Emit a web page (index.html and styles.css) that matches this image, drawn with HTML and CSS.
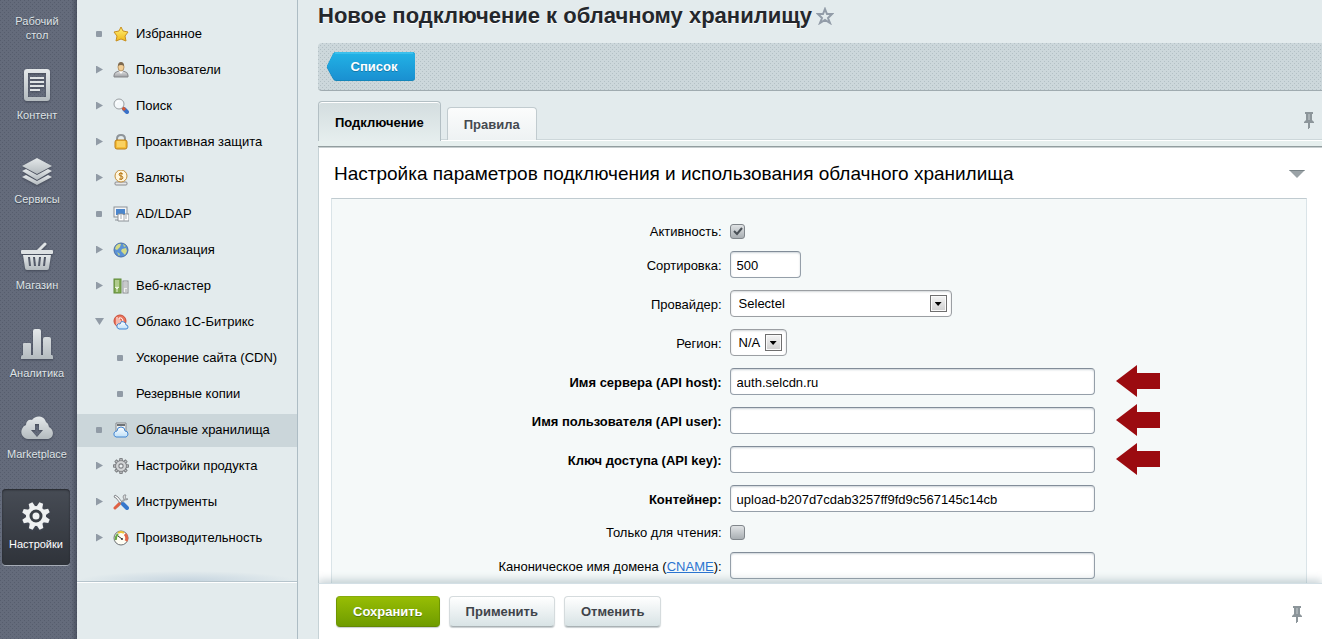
FILE: index.html
```html
<!DOCTYPE html>
<html lang="ru">
<head>
<meta charset="utf-8">
<title>Новое подключение к облачному хранилищу</title>
<link rel="stylesheet" href="styles.css">
</head>
<body>
<svg class="defs" width="0" height="0" aria-hidden="true">
  <defs>
    <linearGradient id="g-rail" x1="0" y1="0" x2="0" y2="1"><stop offset="0" stop-color="#e4e8ea"/><stop offset="1" stop-color="#b4bbbf"/></linearGradient>
    <linearGradient id="g-gold" x1="0" y1="0" x2="0" y2="1"><stop offset="0" stop-color="#fff27a"/><stop offset="1" stop-color="#f0b818"/></linearGradient>
    <linearGradient id="g-grey" x1="0" y1="0" x2="0" y2="1"><stop offset="0" stop-color="#e6e6e6"/><stop offset="1" stop-color="#9c9ea2"/></linearGradient>
    <linearGradient id="g-cloud" x1="0" y1="0" x2="0" y2="1"><stop offset="0" stop-color="#ffffff"/><stop offset="1" stop-color="#bfe0f8"/></linearGradient>
    <symbol id="pin" viewBox="0 0 10 17"><path d="M1 0h8v2H8v6l2 2v1H0v-1l2-2V2H1z" fill="#8c959a"/><path d="M4 2h2v6H4z" fill="#a9b1b5"/><path d="M4 11h2v5H5v1H4z" fill="#8c959a"/></symbol>
    <symbol id="arrow" viewBox="0 0 44 32"><path d="M0 16 21 0v8h23v16H21v8z" fill="#9b0b10"/></symbol>
    <g id="teeth"><path id="tooth" d="M-3 -9 -2 -14H2L3 -9z"/><path d="M-3 -9 -2 -14H2L3 -9z" transform="rotate(45)"/><path d="M-3 -9 -2 -14H2L3 -9z" transform="rotate(90)"/><path d="M-3 -9 -2 -14H2L3 -9z" transform="rotate(135)"/><path d="M-3 -9 -2 -14H2L3 -9z" transform="rotate(180)"/><path d="M-3 -9 -2 -14H2L3 -9z" transform="rotate(225)"/><path d="M-3 -9 -2 -14H2L3 -9z" transform="rotate(270)"/><path d="M-3 -9 -2 -14H2L3 -9z" transform="rotate(315)"/></g>
  </defs>
</svg>
<div class="shell">
  <nav class="rail" aria-label="Разделы">
    <a class="rail-item rail-item-first" href="#"><span>Рабочий стол</span></a>
    <a class="rail-item" href="#">
      <svg width="26" height="32" viewBox="0 0 26 32"><path fill="url(#g-rail)" fill-rule="evenodd" d="M3 0h20a3 3 0 0 1 3 3v26a3 3 0 0 1-3 3H3a3 3 0 0 1-3-3V3a3 3 0 0 1 3-3zM4 4v24h18V4z"/><path stroke="#dfe3e5" stroke-width="2" d="M6 9h14M6 13h14M6 17h14M6 21h10"/></svg>
      <span>Контент</span></a>
    <a class="rail-item" href="#">
      <svg width="32" height="27" viewBox="0 0 32 27"><g fill="url(#g-rail)"><path d="M16 0 31 8 16 16 1 8z"/><path d="M1 13l4-2 11 6 11-6 4 2-15 9z"/><path d="M1 19l4-2 11 6 11-6 4 2-15 8z"/></g></svg>
      <span>Сервисы</span></a>
    <a class="rail-item" href="#">
      <svg width="32" height="29" viewBox="0 0 32 29"><path d="M17 9 24 2" stroke="#e0e4e6" stroke-width="3" stroke-linecap="round"/><rect y="8" width="32" height="4" rx="1" fill="#dde1e3"/><path fill="url(#g-rail)" fill-rule="evenodd" d="M2 13h28l-2 13q0 2-2 2H6q-2 0-2-2zM7 15l1 9h2l-1-9zM12 15l1 9h2l-1-9zM18 15l-1 9h2l1-9zM23 15l-1 9h2l1-9z"/></svg>
      <span>Магазин</span></a>
    <a class="rail-item" href="#">
      <svg width="32" height="31" viewBox="0 0 32 31"><path fill="url(#g-rail)" d="M2 16q0-1 1-1h6q1 0 1 1v11h2V3q0-2 2-2h4q2 0 2 2v24h2V11q0-2 2-2h4q2 0 2 2v16h1q1 0 1 2v2H0v-2q0-2 2-2z"/></svg>
      <span>Аналитика</span></a>
    <a class="rail-item" href="#">
      <svg width="32" height="24" viewBox="0 0 32 24"><path fill="url(#g-rail)" fill-rule="evenodd" d="M7 23a7 7 0 0 1-6-10 6 6 0 0 1 4-4C5 5 8 3 11 4c3-5 12-5 14 2a6 6 0 0 1 3 5c6 3 5 12-2 12zM14 8v6h-4l6 7 6-7h-4V8z"/></svg>
      <span>Marketplace</span></a>
    <a class="rail-item rail-item-active" href="#" aria-current="page">
      <svg width="28" height="28" viewBox="-14 -14 28 28"><g transform="rotate(22)" fill="#eff1f2"><use href="#teeth"/><circle r="10"/></g><circle r="5" fill="none" stroke="#3b4047" stroke-width="3"/></svg>
      <span>Настройки</span></a>
  </nav>

  <nav class="menu" aria-label="Меню настроек">
    <ul>
      <li><a href="#"><i class="dot"></i>
        <svg width="16" height="16" viewBox="0 0 16 16"><path d="M8 1l2 4 5 1-3 4 1 5-5-2-5 2 1-5-3-4 5-1z" fill="url(#g-gold)" stroke="#c98f1e" stroke-linejoin="round"/></svg>Избранное</a></li>
      <li><a href="#"><i class="tri"></i>
        <svg width="16" height="16" viewBox="0 0 16 16"><path d="M1 15v-2q0-3 5-4h4q5 1 5 4v2z" fill="url(#g-grey)" stroke="#85878a"/><path d="M6 9l2 3 2-3z" fill="#fff"/><ellipse cx="8" cy="5" rx="3" ry="4" fill="#f3cf97" stroke="#b99767"/><path d="M5 4q0-4 3-4t3 4q-3-2-6 0z" fill="#7e6a50"/></svg>Пользователи</a></li>
      <li><a href="#"><i class="tri"></i>
        <svg width="16" height="16" viewBox="0 0 16 16"><path d="M11 11l3 3" stroke="#3a71c8" stroke-width="4" stroke-linecap="round"/><path d="M9 9l3 3" stroke="#d65a35" stroke-width="3"/><circle cx="6" cy="6" r="5" fill="#f4f8fa" stroke="#9a9fa3" stroke-width="1"/><path d="M3 6q0-3 3-3" stroke="#fff" fill="none"/></svg>Поиск</a></li>
      <li><a href="#"><i class="tri"></i>
        <svg width="16" height="16" viewBox="0 0 16 16"><path d="M4 8V5q0-4 4-4t4 4v3" fill="none" stroke="#8e9499" stroke-width="2"/><rect x="2" y="6" width="12" height="9" rx="2" fill="#f5bd36" stroke="#bb7d16"/><path d="M4 8h8M4 10h8M4 12h8" stroke="#ffe58c"/></svg>Проактивная защита</a></li>
      <li><a href="#"><i class="tri"></i>
        <svg width="16" height="16" viewBox="0 0 16 16"><rect x="2" y="12" width="12" height="3" rx="1" fill="#e7e7e7" stroke="#8a8b8e"/><circle cx="8" cy="6" r="6" fill="#fff6de" stroke="#c28e3b"/><path d="M10 4q-4-2-4 0t2 2 2 2-4 1M8 2v8" fill="none" stroke="#b77813"/></svg>Валюты</a></li>
      <li><a href="#"><i class="dot"></i>
        <svg width="16" height="16" viewBox="0 0 16 16"><rect x="1" y="1" width="13" height="10" fill="#f4f5f6" stroke="#8b9197"/><path d="M3 3h9v6H3z" fill="#4b86cc"/><path d="M2 14h5" stroke="#8b9197"/><path d="M5 8h5l1 1 1-1h4v7H5z" fill="#fff" stroke="#8b9197"/><path d="M11 9v6M7 10h2M7 12h2M12 10h2M12 12h2" stroke="#a6abb0"/></svg>AD/LDAP</a></li>
      <li><a href="#"><i class="tri"></i>
        <svg width="16" height="16" viewBox="0 0 16 16"><circle cx="8" cy="8" r="7" fill="#5b92d6" stroke="#4a6ea5"/><path d="M3 4q3-3 5-2l-1 3-3 3-2-1zM9 7l4-1 1 3-2 4-2-2-2-2z" fill="#d4da86"/><path d="M10 2l3 2-2 1zM4 10l3 2-1 2z" fill="#c2d37f"/></svg>Локализация</a></li>
      <li><a href="#"><i class="tri"></i>
        <svg width="16" height="16" viewBox="0 0 16 16"><rect x="1" y="1" width="7" height="14" fill="#85ad55" stroke="#5f8a38"/><path d="M2 3h4M2 5h4M2 7h4" stroke="#dcebc6"/><path d="M2 9h4l-2 2zM4 10v4" fill="#e9f3db" stroke="#e9f3db"/><rect x="10" y="3" width="5" height="12" fill="#f0f0f0" stroke="#8b8e91"/><path d="M11 5h3M11 7h3M11 9h3M13 11v3" stroke="#a0a3a6"/></svg>Веб-кластер</a></li>
      <li><a href="#"><i class="tri tri-open"></i>
        <svg width="16" height="16" viewBox="0 0 16 16"><circle cx="7" cy="7" r="6" fill="#e8735c" stroke="#c94d38"/><path d="M4 3v8M6 10V4q4-1 4 4M7 7h1" fill="none" stroke="#fff"/><path d="M6 15q-3-1-2-4 1-2 3-1 1-4 4-2 2 1 2 3 2 0 2 2t-2 2z" fill="url(#g-cloud)" stroke="#4286d2"/></svg>Облако 1С-Битрикс</a></li>
      <li><a class="sub" href="#"><i class="dot"></i>Ускорение сайта (CDN)</a></li>
      <li><a class="sub" href="#"><i class="dot"></i>Резервные копии</a></li>
      <li><a class="current" href="#" aria-current="page"><i class="dot"></i>
        <svg width="16" height="16" viewBox="0 0 16 16"><path d="M3 1h10v9H3z" fill="#eceeef" stroke="#85898d"/><path d="M4 3h8" stroke="#6e7276" stroke-width="2"/><path d="M3 15q-3-1-2-4 1-2 3-2 0-4 4-4t4 4q3 0 3 3 0 2-2 3z" fill="url(#g-cloud)" stroke="#4286d2"/></svg>Облачные хранилища</a></li>
      <li><a href="#"><i class="tri"></i>
        <svg width="16" height="16" viewBox="-15 -15 30 30"><g fill="#c3c5c8" stroke="#808386" stroke-width="2"><use href="#teeth"/><circle r="10"/></g><circle r="9" fill="#d2d4d6"/><circle r="4" fill="#eef2f3" stroke="#808386" stroke-width="2"/></svg>Настройки продукта</a></li>
      <li><a href="#"><i class="tri"></i>
        <svg width="16" height="16" viewBox="0 0 16 16"><path d="M4 13l8-8" stroke="#a3a7aa" stroke-width="2"/><path d="M2 14l5-5" stroke="#e06144" stroke-width="3" stroke-linecap="round"/><path d="M11 1q-2 2 0 4t4 0l-2 0-1-2 1-2z" fill="#f3f3f3" stroke="#8f9397"/><path d="M2 1l3 2 4 5-2 1-4-5-2-1z" fill="#f7f7f7" stroke="#85898d"/><path d="M10 10l4 4" stroke="#3577cc" stroke-width="4" stroke-linecap="round"/></svg>Инструменты</a></li>
      <li><a href="#"><i class="tri"></i>
        <svg width="16" height="16" viewBox="0 0 16 16"><circle cx="8" cy="8" r="7" fill="#fffef4" stroke="#6e7276"/><path d="M3 10q-1-3 2-6" stroke="#67a844" stroke-width="2" fill="none"/><path d="M5 3q3-2 6 0" stroke="#f0c539" stroke-width="2" fill="none"/><path d="M12 4q3 3 1 7" stroke="#e26748" stroke-width="3" fill="none"/><path d="M5 6l4 3" stroke="#333" stroke-width="1"/><circle cx="9" cy="9" r="1" fill="#333"/></svg>Производительность</a></li>
    </ul>
    <div class="menu-end"></div>
  </nav>

  <main class="main">
    <div class="scroll">
      <header class="title-row">
        <h1>Новое подключение к облачному хранилищу</h1>
        <button class="plain" type="button" aria-label="В избранное"><svg width="18" height="18" viewBox="0 0 18 18"><path d="M9 2l2 5h5l-4 4 2 5-5-3-5 3 2-5-4-4h5z" fill="none" stroke="#929ca8" stroke-width="2"/></svg></button>
      </header>
      <div class="toolbar"><a class="back" href="#"><svg width="88" height="30" viewBox="0 0 88 30" aria-hidden="true"><defs><linearGradient id="g-blue" x1="0" y1="0" x2="0" y2="1"><stop offset="0" stop-color="#22b3e6"/><stop offset="1" stop-color="#1a90d1"/></linearGradient></defs><path d="M9 0h76q3 0 3 3v23q0 3-3 3H9q-2 0-3-2L0 16v-2L6 2q1-2 3-2z" fill="#1486bb"/><path d="M9 0h76q3 0 3 3v22q0 3-3 3H9q-2 0-3-2L0 15v-1L6 2q1-2 3-2z" fill="url(#g-blue)"/><path d="M8 1h78" stroke="#55cdf3"/></svg><span>Список</span></a></div>
      <div class="tabs" role="tablist">
        <button class="tab tab-active" type="button" role="tab" aria-selected="true">Подключение</button>
        <button class="tab" type="button" role="tab" aria-selected="false">Правила</button>
        <button class="plain tabs-pin" type="button" aria-label="Закрепить"><svg width="10" height="17"><use href="#pin"/></svg></button>
      </div>
      <div class="strip"></div>
      <section class="sheet">
        <div class="sheet-head">
          <h2>Настройка параметров подключения и использования облачного хранилища</h2>
          <button class="plain" type="button" aria-label="Свернуть"><svg width="16" height="8" viewBox="0 0 16 8"><path d="M0 0h16L8 8z" fill="#9aa2a6"/><path d="M0 0h16l-1 1H1z" fill="#788286"/></svg></button>
        </div>
        <form class="panel" id="storage">
          <div class="row row-check"><label for="active">Активность:</label><div class="field"><span class="check"><input id="active" type="checkbox" checked><svg width="15" height="15" viewBox="0 0 15 15"><path d="M4 7l3 3 5-6" fill="none" stroke="#4a5157" stroke-width="2"/></svg></span></div></div>
          <div class="row"><label for="sort">Сортировка:</label><div class="field"><input class="text short" id="sort" type="text" value="500"></div></div>
          <div class="row"><label for="provider">Провайдер:</label><div class="field"><span class="select wide"><select id="provider"><option>Selectel</option></select></span></div></div>
          <div class="row"><label for="region">Регион:</label><div class="field"><span class="select tiny"><select id="region"><option>N/A</option></select></span></div></div>
          <div class="row required"><label for="host">Имя сервера (API host):</label><div class="field"><input class="text" id="host" type="text" value="auth.selcdn.ru"><svg class="arrow" width="44" height="32"><use href="#arrow"/></svg></div></div>
          <div class="row required"><label for="user">Имя пользователя (API user):</label><div class="field"><input class="text" id="user" type="text"><svg class="arrow" width="44" height="32"><use href="#arrow"/></svg></div></div>
          <div class="row required"><label for="key">Ключ доступа (API key):</label><div class="field"><input class="text" id="key" type="text"><svg class="arrow" width="44" height="32"><use href="#arrow"/></svg></div></div>
          <div class="row required"><label for="bucket">Контейнер:</label><div class="field"><input class="text" id="bucket" type="text" value="upload-b207d7cdab3257ff9fd9c567145c14cb"></div></div>
          <div class="row row-check"><label for="readonly">Только для чтения:</label><div class="field"><span class="check"><input id="readonly" type="checkbox"></span></div></div>
          <div class="row"><label for="cname">Каноническое имя домена (<a href="#">CNAME</a>):</label><div class="field"><input class="text" id="cname" type="text"></div></div>
        </form>
      </section>
    </div>
    <footer class="actions">
      <button class="btn btn-save" type="submit" form="storage">Сохранить</button>
      <button class="btn" type="button">Применить</button>
      <button class="btn" type="button">Отменить</button>
      <button class="plain actions-pin" type="button" aria-label="Закрепить"><svg width="10" height="17"><use href="#pin"/></svg></button>
    </footer>
  </main>
</div>
</body>
</html>
```
FILE: styles.css
```css
*, *::before, *::after { box-sizing: border-box; }

body {
  margin: 0;
  background: #e3ebed;
  color: #000;
  font: 13px/16px "Liberation Sans", Arial, sans-serif;
}

button, input, select { font: inherit; color: inherit; }
svg { display: block; flex: none; }
.defs { position: absolute; }

.plain {
  padding: 0;
  border: 0;
  background: none;
  cursor: pointer;
}

.shell {
  display: flex;
  height: 100vh;
  overflow: hidden;
}

/* Section rail */
.rail {
  flex: none;
  width: 77px;
  padding: 0 7px 0 2px;
  display: flex;
  flex-direction: column;
  gap: 9px;
  background-color: #646b7b;
  background-image:
    linear-gradient(to left, rgba(40, 46, 60, .4), transparent 6px),
    conic-gradient(at 1px 1px, transparent 75%, #565d6d 0),
    conic-gradient(at 1px 1px, transparent 75%, #565d6d 0);
  background-size: auto, 4px 4px, 4px 4px;
  background-position: 0 0, 0 0, 2px 2px;
}

.rail-item {
  display: flex;
  flex-direction: column;
  align-items: center;
  gap: 7px;
  padding: 13px 0 14px 2px;
  border-radius: 4px;
  color: #dfe3e6;
  font-size: 11px;
  line-height: 14px;
  text-align: center;
  text-decoration: none;
  text-shadow: 0 1px 1px #3a404c;
}

.rail-item-first { padding: 14px 11px 5px 13px; }

.rail-item svg { filter: drop-shadow(0 1px 1px #434957); }

.rail-item-active {
  margin-top: 5px;
  padding-left: 0;
  color: #fff;
  background: linear-gradient(#474c55, #2f333a);
  box-shadow: inset 0 1px 2px #22252b, 0 1px 0 #a6acb6;
}

/* Settings menu */
.menu {
  flex: none;
  width: 221px;
  padding-top: 18px;
  border-right: 1px solid #adbcc4;
}

.menu ul {
  margin: 0;
  padding: 0;
  display: flex;
  flex-direction: column;
  gap: 3px;
  list-style: none;
}

.menu a {
  display: flex;
  align-items: center;
  gap: 7px;
  height: 33px;
  padding: 0 0 2px 18px;
  color: #000;
  text-decoration: none;
  white-space: nowrap;
}

.menu a.sub { padding-left: 39px; gap: 13px; }
.menu a.current { background: #cbd6da; }

.dot {
  width: 6px;
  height: 6px;
  margin: 0 4px 0 1px;
  border-radius: 1px;
  background: #919ba6;
}

.sub .dot { margin-right: 0; }

.tri {
  width: 7px;
  height: 8px;
  margin: 0 3px 0 1px;
  background: #919ba6;
  clip-path: polygon(0 0, 100% 50%, 0 100%);
}

.tri-open {
  width: 9px;
  height: 7px;
  margin: 0 2px 0 0;
  clip-path: polygon(0 0, 100% 0, 50% 100%);
}

.menu-end {
  height: 27px;
  border-bottom: 1px solid #b6c4cc;
  box-shadow: 0 1px 0 #fff;
  background: radial-gradient(ellipse 110px 10px at 50% 100%, #c5d4df, transparent);
}

/* Main column */
.main {
  flex: 1;
  min-width: 0;
  padding-left: 20px;
  display: flex;
  flex-direction: column;
}

.scroll {
  flex: 1;
  min-height: 0;
  overflow-y: auto;
  scrollbar-width: none;
}

.title-row {
  display: flex;
  align-items: center;
  gap: 4px;
  padding: 2px 0 13px;
}

h1 {
  margin: 0;
  color: #24272c;
  font-size: 22px;
  line-height: 28px;
  text-shadow: 0 1px 0 #fff;
}

.toolbar {
  display: flex;
  align-items: center;
  height: 48px;
  padding: 0 9px;
  border-bottom: 1px solid #a0abb0;
  border-radius: 4px 0 0 4px;
  background-color: #ccd7db;
  background-image:
    conic-gradient(at 1px 1px, transparent 75%, #b3c0c5 0),
    conic-gradient(at 1px 1px, transparent 75%, #b3c0c5 0);
  background-size: 4px 4px;
  background-position: 0 0, 2px 2px;
}

.back {
  display: grid;
  color: #fff;
  font-weight: bold;
  line-height: 30px;
  text-align: center;
  text-decoration: none;
  text-shadow: 0 1px 0 #1579ab;
}

.back svg, .back span { grid-area: 1 / 1; }
.back span { padding-left: 6px; z-index: 1; }

.tabs {
  display: flex;
  align-items: flex-end;
  gap: 6px;
  padding-top: 10px;
  border-bottom: 1px solid #fff;
  box-shadow: inset 0 -1px 0 #cdd7da;
}

.tab {
  height: 33px;
  padding: 1px 16px 0;
  border: 1px solid #c1cbcf;
  border-bottom: 0;
  border-radius: 4px 4px 0 0;
  background: linear-gradient(#fbfcfc, #eef2f3);
  color: #45494f;
  font-weight: bold;
}

.tab-active {
  height: 40px;
  margin-bottom: -1px;
  padding-top: 2px;
  border-color: #b3bfc4;
  background: linear-gradient(#d3dddf, #e6eeee);
  box-shadow: inset 0 1px 0 #fff;
  color: #000;
}

.tabs-pin { margin: 0 8px 11px auto; }

.strip {
  height: 6px;
  border-bottom: 1px solid #929d9f;
  background: #e6efee;
}

.sheet {
  padding: 0 15px 20px 12px;
  border-left: 1px solid #c6d2d6;
  border-top: 1px solid #c8cfd0;
  background: #fff;
}

.sheet-head {
  display: flex;
  align-items: center;
  justify-content: space-between;
  gap: 16px;
  height: 50px;
  padding: 2px 2px 0 3px;
}

h2 {
  margin: 0;
  font-size: 19px;
  font-weight: normal;
  line-height: 24px;
}

.panel {
  padding: 18px 0;
  border: 1px solid #dae4e8;
  border-top-color: #c0cbd0;
  background: #f5f9f9;
}

.row {
  display: grid;
  grid-template-columns: 40% 1fr;
  align-items: center;
  column-gap: 8px;
  padding: 6px 0;
}

.row-check { height: 28px; padding: 0; }
.row > label { padding-top: 2px; text-align: right; }
.required > label { font-weight: bold; }
.row a { color: #2a74d0; }

.field {
  display: flex;
  align-items: center;
  gap: 21px;
}

.text {
  width: 365px;
  height: 27px;
  padding: 1px 6px 0;
  border: 1px solid #959fa9;
  border-top-color: #828d99;
  border-radius: 4px;
  background: #fff;
  box-shadow: inset 0 1px 2px #ccd3d8;
}

.short { width: 71px; }
.arrow { margin: -5px 0 -3px; }

.select { position: relative; }
.wide { width: 222px; }
.tiny { width: 57px; }

.select select {
  display: block;
  width: 100%;
  height: 27px;
  padding: 1px 20px 0 8px;
  appearance: none;
  border: 1px solid #9b9fa3;
  border-radius: 4px;
  background: #fff;
  box-shadow: inset 0 1px 2px #d3d7da;
}

.select::before {
  content: "";
  position: absolute;
  top: 5px;
  right: 5px;
  width: 17px;
  height: 17px;
  border: 1px solid #6f6f6f;
  background: linear-gradient(#f4f4f4, #cfcfcf);
  box-shadow: inset 0 0 0 1px #fafafa;
  pointer-events: none;
}

.select::after {
  content: "";
  position: absolute;
  top: 12px;
  right: 10px;
  width: 7px;
  height: 4px;
  background: #000;
  clip-path: polygon(0 0, 100% 0, 50% 100%);
  pointer-events: none;
}

.check { position: relative; }

.check input {
  display: block;
  width: 15px;
  height: 15px;
  margin: 0;
  appearance: none;
  border: 1px solid #80868b;
  border-radius: 3px;
  background: linear-gradient(#e0e3e5, #a9afb3);
}

.check svg {
  position: absolute;
  inset: 0;
  pointer-events: none;
}

/* Action bar */
.actions {
  position: relative;
  flex: none;
  display: flex;
  align-items: center;
  gap: 9px;
  height: 56px;
  padding: 0 20px 0 17px;
  border-left: 1px solid #c6d2d6;
  border-top: 1px solid #d3dfe5;
  background: #fff;
  box-shadow: 0 -3px 8px rgba(120, 145, 155, .4);
  clip-path: inset(-12px 0 0 0);
}

.btn {
  height: 31px;
  padding: 0 16px;
  border: 1px solid #d5dbdd;
  border-bottom-color: #a9b1b4;
  border-radius: 4px;
  background: linear-gradient(#fff, #d8e3e5);
  box-shadow: 0 1px 1px #c9cfd1;
  color: #3f4449;
  font-weight: bold;
}

.btn-save {
  border-color: #86ab0d #6f9600 #648805;
  background: linear-gradient(#97bd04, #6f9c00);
  color: #fff;
  text-shadow: 0 1px 0 #56780a;
}

.actions-pin { margin: 6px 0 0 auto; }
```
